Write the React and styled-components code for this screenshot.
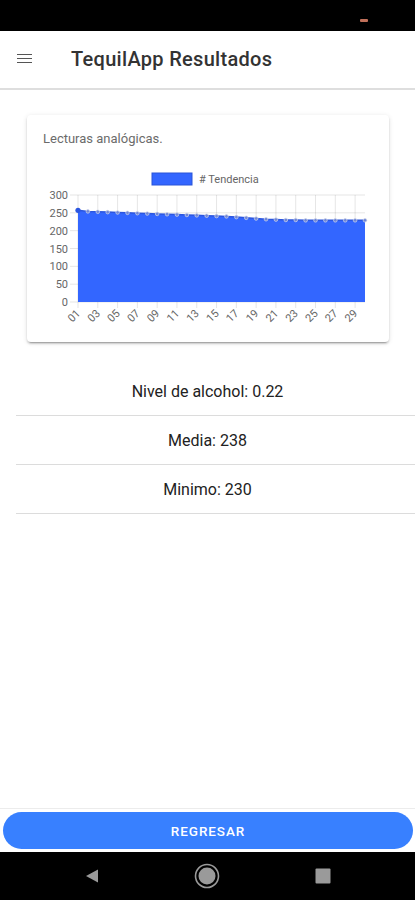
import React from "react";
import styled, { createGlobalStyle } from "styled-components";

const Global = createGlobalStyle`
  html, body { margin: 0; padding: 0; background: #fff; }
  body { font-family: Roboto, "Noto Sans", Arial, sans-serif; }
  * { box-sizing: border-box; }
`;

const Screen = styled.div`
  width: 415px;
  height: 900px;
  display: flex;
  flex-direction: column;
  background: #fff;
  overflow: hidden;
`;

const StatusBar = styled.div`
  height: 31px;
  background: #000;
  display: flex;
  justify-content: flex-end;
  align-items: flex-start;
  padding: 19px 47px 0 0;
`;

const StatusMark = styled.span`
  width: 8px;
  height: 3px;
  border-radius: 1px;
  background: #c0705a;
`;

const AppBar = styled.header`
  height: 59px;
  display: flex;
  align-items: center;
  padding: 0 0 2px 17px;
  border-bottom: 2px solid #dedede;
  background: #fff;
`;

const MenuButton = styled.div`
  width: 15px;
  display: flex;
  flex-direction: column;
  gap: 2.6px;
  margin-right: 39px;
  span {
    display: block;
    height: 1.6px;
    background: #555;
  }
`;

const Title = styled.h1`
  margin: 0;
  font-size: 20px;
  font-weight: 500;
  color: #333;
  letter-spacing: 0.3px;
`;

const Content = styled.main`
  flex: 1;
  display: flex;
  flex-direction: column;
`;

const Card = styled.section`
  margin: 25px 26px 0 27px;
  background: #fff;
  border-radius: 4px;
  box-shadow: 0 3px 1px -2px rgba(0,0,0,0.2), 0 2px 2px 0 rgba(0,0,0,0.14), 0 1px 5px 0 rgba(0,0,0,0.12);
  padding: 16px 16px 9px 16px;
`;

const CardTitle = styled.div`
  font-size: 13px;
  line-height: 16px;
  color: #6b6b6b;
`;

const ChartSvg = styled.svg`
  display: block;
  margin-top: 18px;
  font-family: Roboto, Arial, sans-serif;
`;

const StatList = styled.div`
  margin-top: 25px;
  display: flex;
  flex-direction: column;
`;

const StatRow = styled.div`
  display: flex;
  flex-direction: column;
  &::after {
    content: "";
    display: block;
    height: 1px;
    margin-left: 16px;
    background: #dcdcdc;
  }
`;

const StatLabel = styled.div`
  height: 48px;
  display: flex;
  align-items: center;
  justify-content: center;
  font-size: 16px;
  color: #222;
`;

const Footer = styled.footer`
  border-top: 1px solid #ececec;
  padding: 3px 2px 3px 3px;
  background: #fff;
`;

const PrimaryButton = styled.button`
  width: 100%;
  height: 37px;
  border: none;
  border-radius: 19px;
  background: #3880ff;
  color: #fff;
  font-family: Roboto, Arial, sans-serif;
  font-size: 13.5px;
  font-weight: 500;
  letter-spacing: 0.9px;
  text-transform: uppercase;
  display: flex;
  align-items: center;
  justify-content: center;
`;

const NavBar = styled.nav`
  height: 48px;
  background: #000;
  display: grid;
  grid-template-columns: repeat(3, 1fr);
  align-items: center;
  justify-items: center;
  padding: 0 34px;
`;

const data = [257, 254, 253, 252, 251, 250, 249, 248, 247, 246, 245, 244, 243, 242, 241, 240, 238, 236, 234, 232, 231, 230, 230, 229, 229, 229, 229, 229, 229, 229];

function Chart() {
  const W = 330, H = 168;
  const x0 = 35, x1 = 322, yTop = 30, yBot = 137;
  const max = 300;
  const step = (x1 - x0) / (data.length - 1);
  const px = (i) => x0 + i * step;
  const py = (v) => yBot - (v / max) * (yBot - yTop);
  const ticks = [0, 50, 100, 150, 200, 250, 300];
  const line = data.map((v, i) => `${i === 0 ? "M" : "L"}${px(i).toFixed(2)},${py(v).toFixed(2)}`).join(" ");
  const area = `${line} L${x1},${yBot} L${x0},${yBot} Z`;
  const labelIdx = data.map((_, i) => i).filter((i) => i % 2 === 0);
  return (
    <ChartSvg width={W} height={H} viewBox={`0 0 ${W} ${H}`}>
      <rect x="109" y="8" width="40" height="12" fill="#3366ff" stroke="#2a55d8" strokeWidth="1" />
      <text x="156" y="18" fontSize="11" fill="#666">
        # Tendencia
      </text>
      {ticks.map((t) => (
        <g key={t}>
          <line x1={x0 - 8} x2={x1} y1={py(t)} y2={py(t)} stroke="rgba(0,0,0,0.1)" strokeWidth="1" />
          <text x={x0 - 10} y={py(t) + 4} fontSize="11" fill="#666" textAnchor="end">
            {t}
          </text>
        </g>
      ))}
      {labelIdx.map((i) => (
        <line key={"v" + i} x1={px(i)} x2={px(i)} y1={yTop} y2={yBot + 6} stroke="rgba(0,0,0,0.1)" strokeWidth="1" />
      ))}
      <path d={area} fill="#3366ff" />
      <path d={line} fill="none" stroke="#2b56e0" strokeWidth="1.5" />
      {data.map((v, i) => (
        <circle key={"p" + i} cx={px(i)} cy={py(v)} r={i === 0 ? 2.6 : 1.8} fill={i === 0 ? "#2b56e0" : "#6f86d8"} stroke="rgba(210,214,230,0.9)" strokeWidth={i === 0 ? 0 : 0.8} />
      ))}
      {labelIdx.map((i) => (
        <text
          key={"l" + i}
          x={px(i) + 3}
          y={yBot + 12}
          fontSize="11"
          fill="#666"
          textAnchor="end"
          transform={`rotate(-45 ${px(i) + 3} ${yBot + 12})`}
        >
          {String(i + 1).padStart(2, "0")}
        </text>
      ))}
    </ChartSvg>
  );
}

export default function App() {
  return (
    <>
      <Global />
      <Screen>
        <StatusBar>
          <StatusMark />
        </StatusBar>
        <AppBar>
          <MenuButton>
            <span />
            <span />
            <span />
          </MenuButton>
          <Title>TequilApp Resultados</Title>
        </AppBar>
        <Content>
          <Card>
            <CardTitle>Lecturas analógicas.</CardTitle>
            <Chart />
          </Card>
          <StatList>
            <StatRow>
              <StatLabel>Nivel de alcohol: 0.22</StatLabel>
            </StatRow>
            <StatRow>
              <StatLabel>Media: 238</StatLabel>
            </StatRow>
            <StatRow>
              <StatLabel>Minimo: 230</StatLabel>
            </StatRow>
          </StatList>
        </Content>
        <Footer>
          <PrimaryButton>Regresar</PrimaryButton>
        </Footer>
        <NavBar>
          <svg width="16" height="16" viewBox="0 0 16 16">
            <path d="M14 1.5 L2 8 L14 14.5 Z" fill="#9a9a9a" />
          </svg>
          <svg width="26" height="26" viewBox="0 0 26 26">
            <circle cx="13" cy="13" r="11.5" fill="none" stroke="#9a9a9a" strokeWidth="1.6" />
            <circle cx="13" cy="13" r="8.5" fill="#9a9a9a" />
          </svg>
          <svg width="16" height="16" viewBox="0 0 16 16">
            <rect x="0.5" y="0.5" width="15" height="15" rx="1" fill="#9a9a9a" />
          </svg>
        </NavBar>
      </Screen>
    </>
  );
}
